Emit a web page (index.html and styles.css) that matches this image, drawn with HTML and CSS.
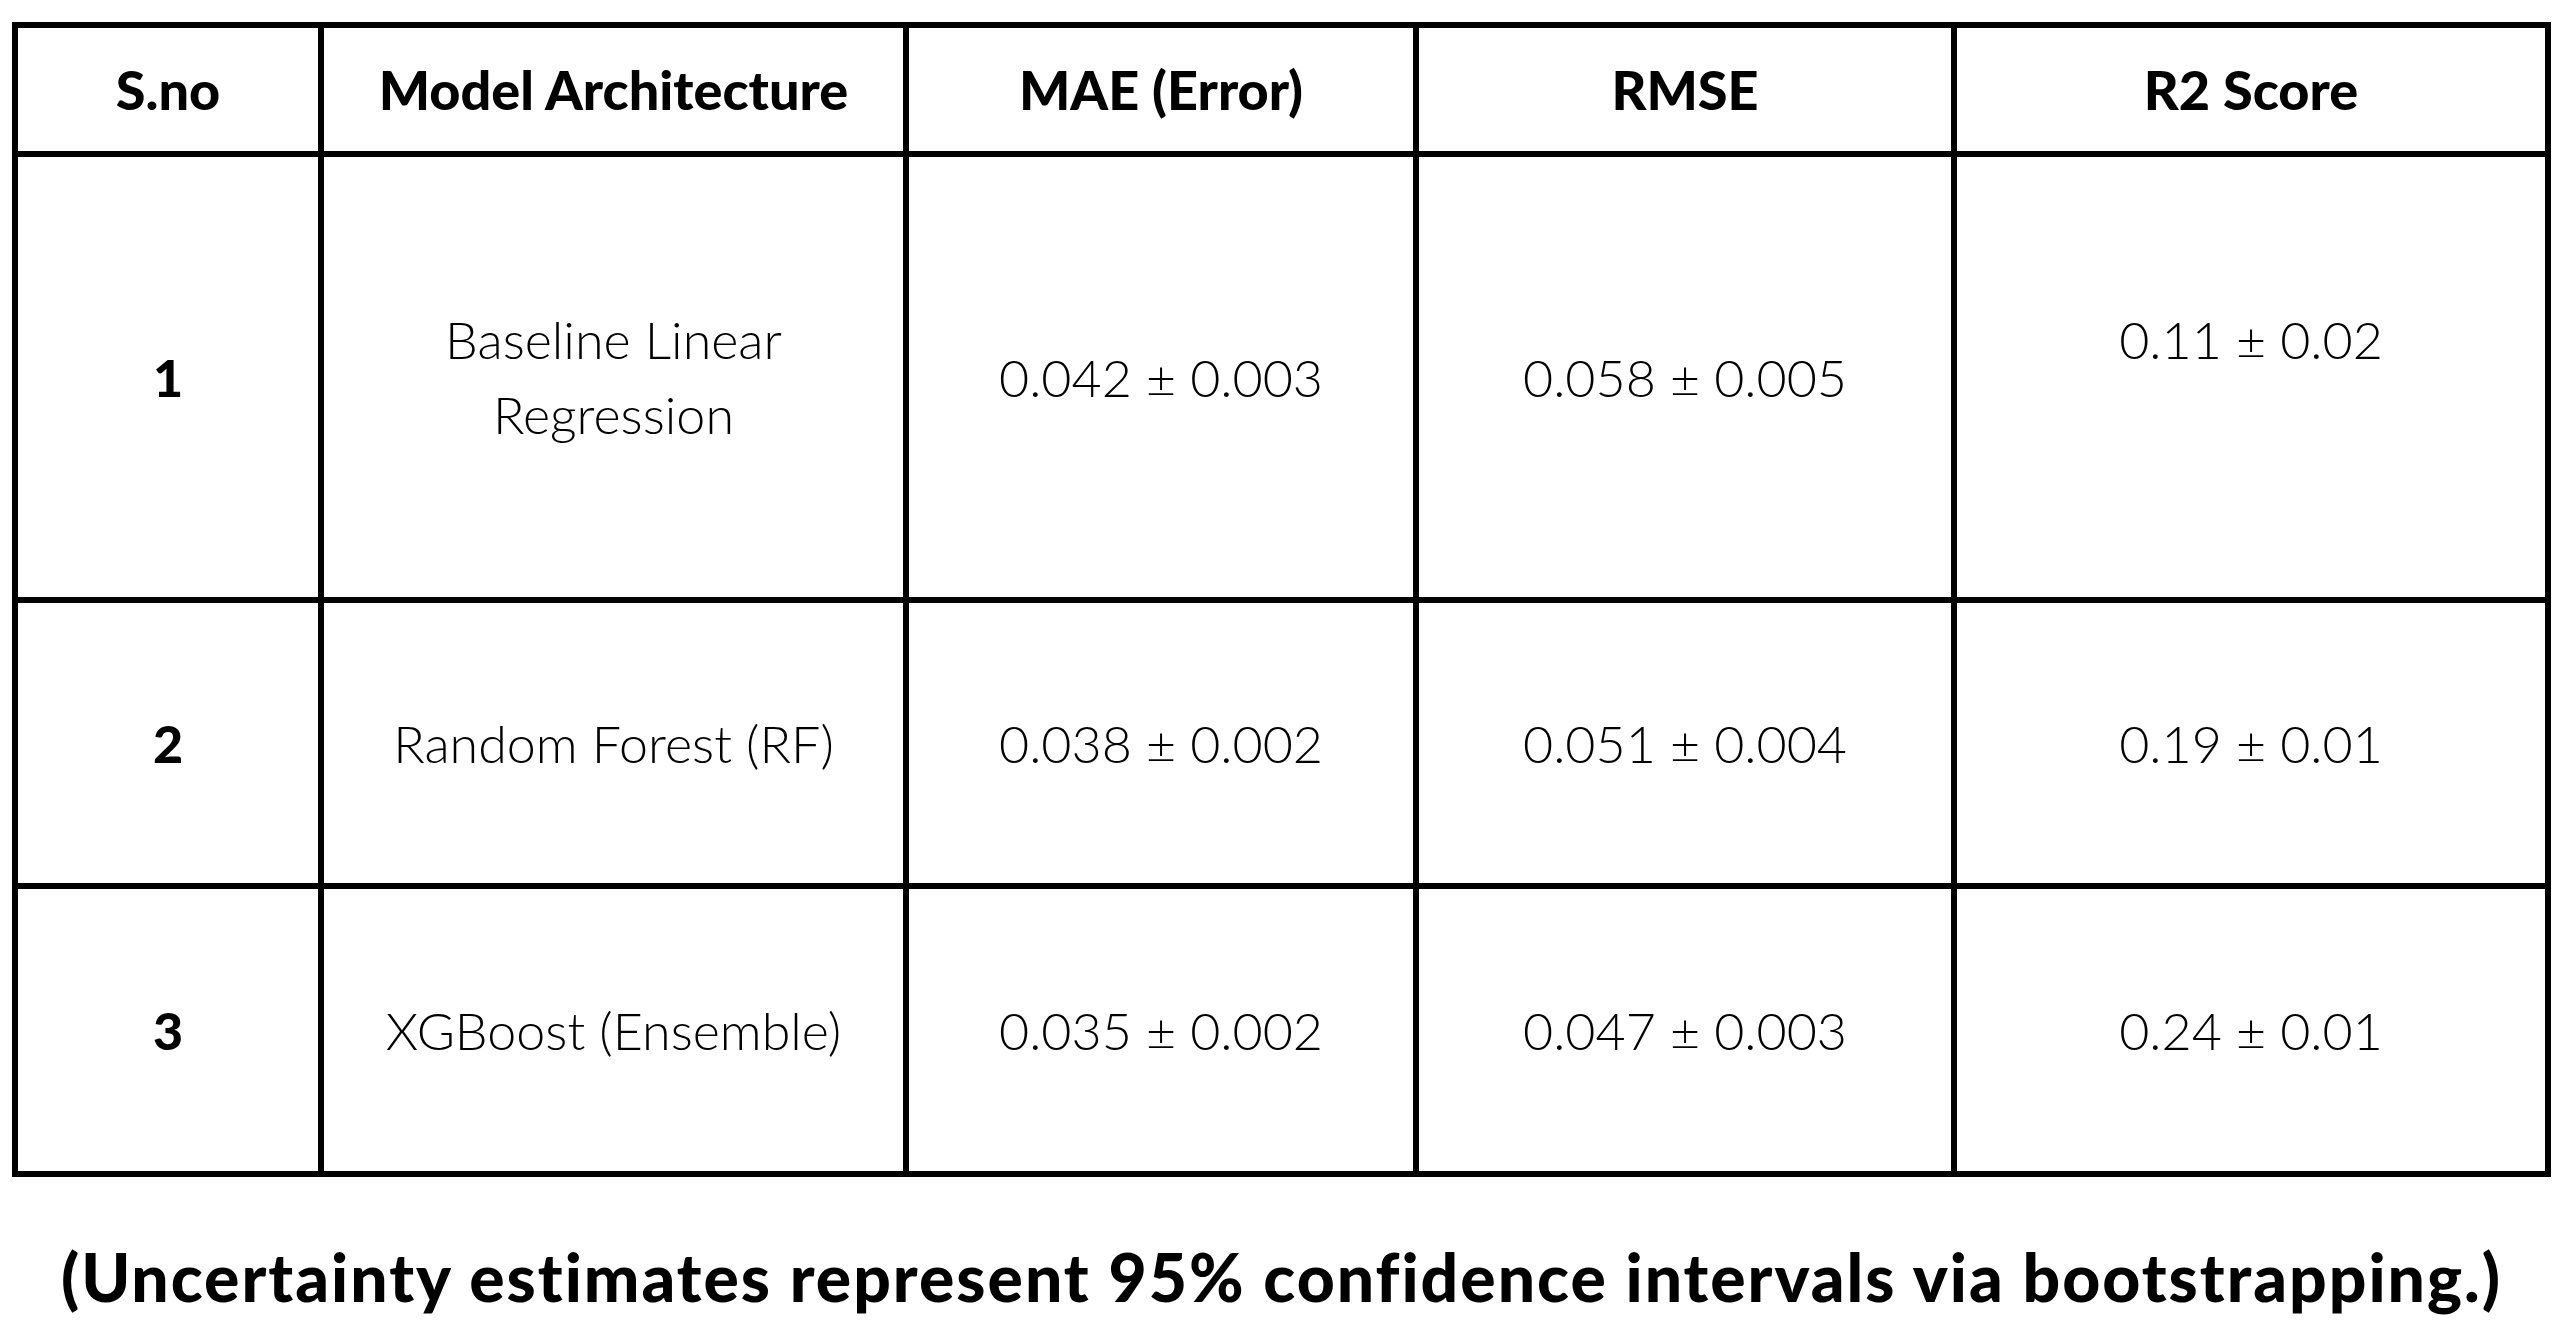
FILE: index.html
```html
<!DOCTYPE html>
<html lang="en">
<head>
<meta charset="utf-8">
<title>Model comparison</title>
<link rel="stylesheet" href="styles.css">
</head>
<body>
<main class="page">
  <div class="results">
    <div class="cell head">S.no</div>
    <div class="cell head">Model Architecture</div>
    <div class="cell head">MAE (Error)</div>
    <div class="cell head">RMSE</div>
    <div class="cell head">R2 Score</div>

    <div class="cell num">1</div>
    <div class="cell">Baseline Linear<br>Regression</div>
    <div class="cell">0.042 ± 0.003</div>
    <div class="cell">0.058 ± 0.005</div>
    <div class="cell raised">0.11 ± 0.02</div>

    <div class="cell num">2</div>
    <div class="cell">Random Forest (RF)</div>
    <div class="cell">0.038 ± 0.002</div>
    <div class="cell">0.051 ± 0.004</div>
    <div class="cell">0.19 ± 0.01</div>

    <div class="cell num">3</div>
    <div class="cell">XGBoost (Ensemble)</div>
    <div class="cell">0.035 ± 0.002</div>
    <div class="cell">0.047 ± 0.003</div>
    <div class="cell">0.24 ± 0.01</div>
  </div>
  <p class="note">(Uncertainty estimates represent 95% confidence intervals via bootstrapping.)</p>
</main>
</body>
</html>
```

FILE: styles.css
```css
* { box-sizing: border-box; }

html, body {
  margin: 0;
  padding: 0;
  background: #ffffff;
}

body {
  width: 2560px;
  height: 1329px;
  overflow: hidden;
  color: #000000;
  font-family: "Lato", "Liberation Sans", sans-serif;
}

.page {
  padding: 22px 9px 0 12px;
}

.results {
  display: grid;
  grid-template-columns: 306px 585px 510px 538px 594px;
  grid-template-rows: 129px 446px 286px 288px;
  width: 2539px;
  border-left: 6px solid #000;
  border-top: 6px solid #000;
}

.cell {
  display: flex;
  align-items: center;
  justify-content: center;
  text-align: center;
  border-right: 6px solid #000;
  border-bottom: 6px solid #000;
  font-size: 52px;
  font-weight: 300;
  line-height: 75px;
}

.head {
  font-weight: 900;
  font-size: 54px;
}

.num {
  font-weight: 900;
}

.raised {
  padding-bottom: 75px;
}

.note {
  margin: 60px 0 0 0;
  text-align: center;
  font-size: 66px;
  font-weight: 900;
  letter-spacing: 2px;
  line-height: 80px;
  white-space: nowrap;
}
```
